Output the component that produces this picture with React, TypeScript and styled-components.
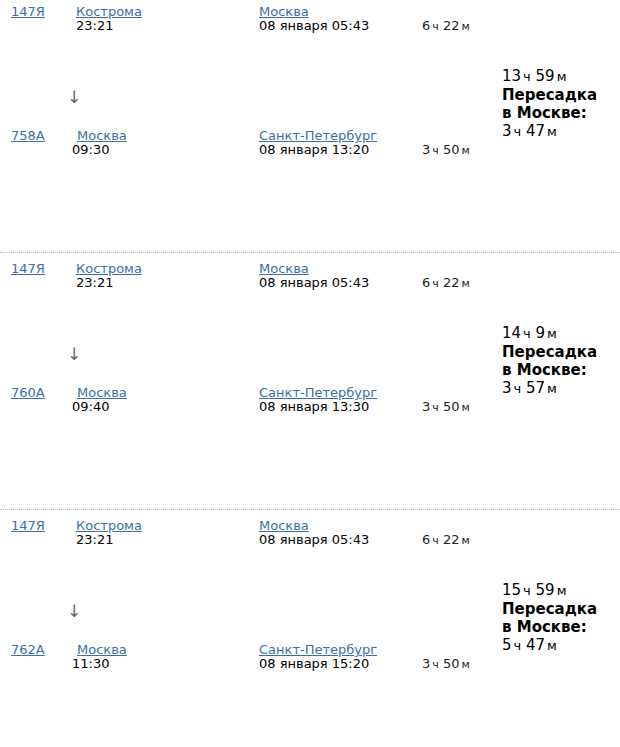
import styled, { createGlobalStyle } from "styled-components";

const GlobalStyle = createGlobalStyle`
    body {
        margin: 0;
        background: #fff;
        font-family: "DejaVu Sans", Verdana, sans-serif;
        color: #000;
    }
`;

const List = styled.div`
    margin-top: -4px;
    width: 620px;
`;

const Block = styled.div`
    box-sizing: border-box;
    height: 257px;
    padding-top: 9px;
    display: flex;
    border-bottom: 1px dotted #b9b9b9;
    &:last-child {
        border-bottom: none;
    }
`;

const Legs = styled.div`
    width: 502px;
    flex-shrink: 0;
`;

const Leg = styled.div<{ $gap?: number }>`
    display: grid;
    grid-template-columns: 61px 187px 163px 80px;
    padding-left: 11px;
    margin-top: ${(p) => p.$gap ?? 0}px;
    font-size: 13px;
    line-height: 14px;
`;

const Link = styled.a<{ $indent?: number }>`
    color: #3a6fa8;
    text-decoration: underline;
    margin-left: ${(p) => p.$indent ?? 0}px;
    cursor: pointer;
`;

const Cell = styled.div`
    display: flex;
    flex-direction: column;
    align-items: flex-start;
`;

const Time = styled.span<{ $indent?: number }>`
    margin-left: ${(p) => p.$indent ?? 0}px;
    color: #000;
`;

const DurationCell = styled.div`
    padding-top: 14px;
    color: #222;
`;

const Unit = styled.span<{ $size: number }>`
    font-size: ${(p) => p.$size}px;
    margin-left: 2px;
`;

const Arrow = styled.div`
    margin-top: 56px;
    margin-left: 67px;
    font-size: 17px;
    line-height: 14px;
    color: #666;
`;

const Transfer = styled.div`
    padding-top: 62px;
    font-size: 15px;
    line-height: 18px;
    color: #000;
`;

const Bold = styled.div`
    font-weight: bold;
`;

type LegData = {
    train: string;
    from: string;
    dep: string;
    to: string;
    arr: string;
    dur: [number, number];
};

type Trip = {
    legs: [LegData, LegData];
    total: [number, number];
    wait: [number, number];
};

const first: LegData = {
    train: "147Я",
    from: "Кострома",
    dep: "23:21",
    to: "Москва",
    arr: "08 января 05:43",
    dur: [6, 22],
};

const trips: Trip[] = [
    {
        legs: [first, { train: "758А", from: "Москва", dep: "09:30", to: "Санкт-Петербург", arr: "08 января 13:20", dur: [3, 50] }],
        total: [13, 59],
        wait: [3, 47],
    },
    {
        legs: [first, { train: "760А", from: "Москва", dep: "09:40", to: "Санкт-Петербург", arr: "08 января 13:30", dur: [3, 50] }],
        total: [14, 9],
        wait: [3, 57],
    },
    {
        legs: [first, { train: "762А", from: "Москва", dep: "11:30", to: "Санкт-Петербург", arr: "08 января 15:20", dur: [3, 50] }],
        total: [15, 59],
        wait: [5, 47],
    },
];

function Duration({ value, unit }: { value: [number, number]; unit: number }) {
    return (
        <span>
            {value[0]}
            <Unit $size={unit}>ч</Unit> {value[1]}
            <Unit $size={unit}>м</Unit>
        </span>
    );
}

function LegRow({ leg, second }: { leg: LegData; second?: boolean }) {
    return (
        <Leg $gap={second ? 25 : 0}>
            <Cell>
                <Link>{leg.train}</Link>
            </Cell>
            <Cell>
                <Link $indent={second ? 5 : 4}>{leg.from}</Link>
                <Time $indent={second ? 0 : 4}>{leg.dep}</Time>
            </Cell>
            <Cell>
                <Link>{leg.to}</Link>
                <Time>{leg.arr}</Time>
            </Cell>
            <DurationCell>
                <Duration value={leg.dur} unit={11} />
            </DurationCell>
        </Leg>
    );
}

export default function App() {
    return (
        <>
            <GlobalStyle />
            <List>
                {trips.map((trip, i) => (
                    <Block key={i}>
                        <Legs>
                            <LegRow leg={trip.legs[0]} />
                            <Arrow>↓</Arrow>
                            <LegRow leg={trip.legs[1]} second />
                        </Legs>
                        <Transfer>
                            <Duration value={trip.total} unit={13} />
                            <Bold>Пересадка</Bold>
                            <Bold>в Москве:</Bold>
                            <Duration value={trip.wait} unit={13} />
                        </Transfer>
                    </Block>
                ))}
            </List>
        </>
    );
}
